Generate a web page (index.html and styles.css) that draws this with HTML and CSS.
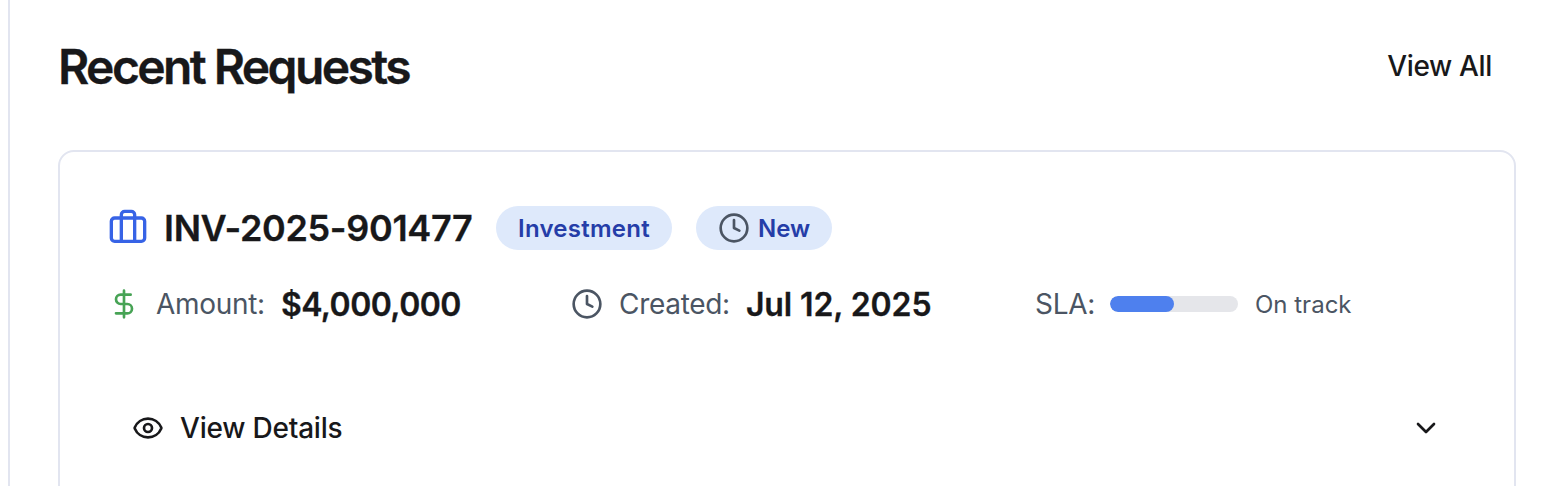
FILE: index.html
```html
<!DOCTYPE html>
<html lang="en">
<head>
<meta charset="utf-8">
<title>Recent Requests</title>
<link rel="stylesheet" href="styles.css">
</head>
<body>
<main class="panel">
  <header class="panel-head">
    <h1 class="title">Recent Requests</h1>
    <a class="view-all">View All</a>
  </header>
  <section class="card">
    <div class="row-id">
      <svg class="icon case" viewBox="0 0 24 24"><path d="M16 20V4a2 2 0 0 0-2-2h-4a2 2 0 0 0-2 2v16"/><rect width="20" height="14" x="2" y="6" rx="2"/></svg>
      <h2 class="request-id">INV-2025-901477</h2>
      <span class="badge badge-type">Investment</span>
      <span class="badge badge-status"><svg class="icon clock" viewBox="0 0 24 24"><circle cx="12" cy="12" r="10"/><path d="M12 6v6l4 2"/></svg><span class="status-text">New</span></span>
    </div>
    <div class="facts">
      <div class="fact amount">
        <svg class="icon dollar" viewBox="0 0 24 24"><path d="M12 2v20M17 5H9.5a3.5 3.5 0 0 0 0 7h5a3.5 3.5 0 0 1 0 7H6"/></svg>
        <span class="label l-amount">Amount:</span><span class="value v-amount">$4,000,000</span>
      </div>
      <div class="fact created">
        <svg class="icon clock" viewBox="0 0 24 24"><circle cx="12" cy="12" r="10"/><path d="M12 6v6l4 2"/></svg>
        <span class="label l-created">Created:</span><span class="value v-created">Jul 12, 2025</span>
      </div>
      <div class="fact sla">
        <span class="label l-sla">SLA:</span><span class="track"><span class="fill"></span></span><span class="state">On track</span>
      </div>
    </div>
    <div class="details">
      <svg class="icon eye" viewBox="0 0 24 24"><path d="M2.06 12.35a1 1 0 0 1 0-.7 10.75 10.75 0 0 1 19.88 0 1 1 0 0 1 0 .7 10.75 10.75 0 0 1-19.88 0"/><circle cx="12" cy="12" r="3"/></svg>
      <span class="details-text">View Details</span>
      <svg class="icon chevron" viewBox="0 0 24 24"><path d="m6 9 6 6 6-6"/></svg>
    </div>
  </section>
</main>
</body>
</html>
```
FILE: styles.css
```css
* { box-sizing: border-box; }
body { margin: 0; background: #fff; color: #18181a; font-family: Inter, sans-serif; overflow: hidden; }
.panel { height: 486px; margin-left: 8px; padding: 36px 26px 0 48px; border-left: 2px solid #e2e5f0; }
.panel-head { display: flex; justify-content: space-between; align-items: center; height: 64px; padding-right: 24px; }
.title { margin: -2px 0 0; font-size: 48px; line-height: 64px; font-weight: 600; letter-spacing: -2.6px; white-space: nowrap; -webkit-text-stroke: 0.3px currentColor; }
.view-all { font-size: 28px; font-weight: 500; line-height: 40px; margin-top: -4px; letter-spacing: -0.35px; }
.card { height: 360px; margin-top: 50px; padding: 52px 48px 0; border: 2px solid #e2e5f0; border-radius: 16px; }
.icon { flex: none; width: 32px; height: 32px; fill: none; stroke: currentColor; stroke-width: 2; stroke-linecap: round; stroke-linejoin: round; }
.row-id, .fact, .details, .badge { display: flex; align-items: center; white-space: nowrap; }
.row-id { height: 48px; }
.case { width: 40px; height: 40px; color: #3763e6; }
.request-id { margin: 0 0 0 16px; width: 308px; font-size: 36px; font-weight: 600; letter-spacing: -0.34px; -webkit-text-stroke: 0.3px currentColor; }
.badge { height: 44px; padding: 0 22px; border-radius: 22px; background: #dee9fb; color: #253da8; font-size: 24px; font-weight: 600; margin-left: 24px; letter-spacing: 0.25px; }
.badge-type { width: 176px; }
.badge-status { width: 136px; letter-spacing: 0; }
.clock { color: #4b5563; }
.status-text { margin-left: 8px; }
.facts { display: grid; grid-template-columns: 463px 464px 1fr; height: 40px; margin-top: 32px; }
.dollar { color: #47a355; }
.label { color: #4b5563; font-size: 28px; margin-left: 16px; letter-spacing: -0.3px; }
.value { font-size: 32px; font-weight: 600; margin-left: 16px; -webkit-text-stroke: 0.3px currentColor; }
.v-amount { letter-spacing: -0.55px; }
.v-created { letter-spacing: -0.1px; }
.l-sla { margin-left: 0; }
.track { width: 128px; height: 16px; margin-left: 15px; border-radius: 8px; background: #e5e6ea; overflow: hidden; }
.fill { display: block; width: 50%; height: 100%; border-radius: 8px; background: #4e80ee; }
.state { font-size: 24px; color: #4b5563; margin-left: 17px; }
.details { height: 64px; margin-top: 72px; padding: 0 24px; font-size: 28px; font-weight: 500; letter-spacing: -0.22px; }
.details-text { margin-left: 16px; }
.chevron { margin-left: auto; }
```
